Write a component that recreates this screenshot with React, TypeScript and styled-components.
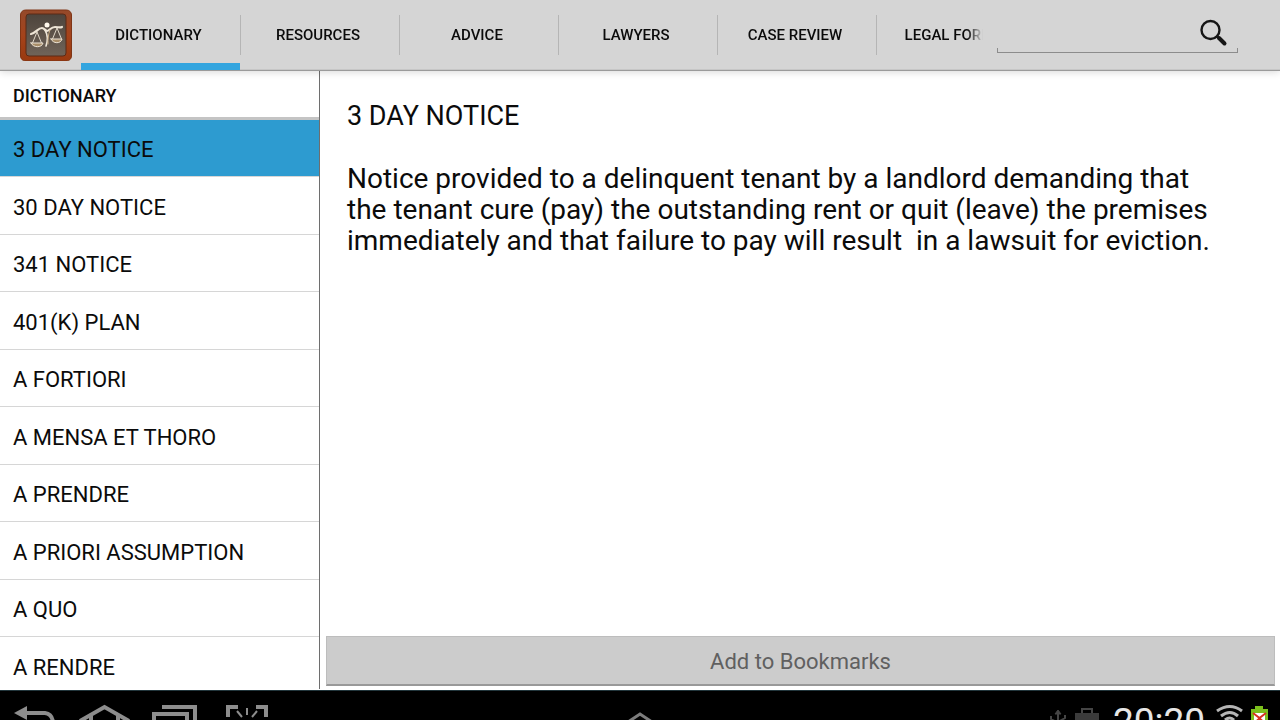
import React from 'react';
import styled, { createGlobalStyle } from 'styled-components';

const GlobalStyle = createGlobalStyle`
  * { box-sizing: border-box; }
  body { margin: 0; background: #fff; color: #0b0b0b; font-family: Roboto, "Liberation Sans", sans-serif; }
  button, input { font-family: inherit; color: inherit; }
`;

const Screen = styled.div`
  display: flex;
  flex-direction: column;
  height: 100vh;
  overflow: hidden;
`;

const TopBar = styled.header`
  display: flex;
  flex: none;
  height: 71px;
  padding-left: 11px;
  background: #d5d5d5;
  border-bottom: 1px solid #9a9a9a;
  box-shadow: inset 0 -1px 0 #c6c6c6, 0 1px 8px rgba(0, 0, 0, 0.16);
  z-index: 1;
`;

const Logo = styled.a`
  display: flex;
  flex: none;
  align-items: center;
  justify-content: center;
  width: 70px;
  svg { display: block; }
`;

const Tabs = styled.nav`
  display: flex;
  flex: 1;
  min-width: 0;
  overflow: hidden;
  mask-image: linear-gradient(to right, #000 calc(100% - 18px), transparent calc(100% - 2px));
`;

const Tab = styled.button<{ $active?: boolean }>`
  flex: none;
  display: flex;
  align-items: center;
  width: 159px;
  padding: 0;
  border: 0;
  background: none;
  font-size: 15px;
  font-weight: 500;
  line-height: 20px;
  cursor: pointer;
  box-shadow: ${(p) => (p.$active ? 'inset 0 -7px 0 #33a5df' : 'none')};

  span {
    flex: 1;
    display: flex;
    align-items: center;
    justify-content: center;
    height: 40px;
    padding-right: 4px;
  }
  &:not(:first-child) span { border-left: 1px solid #b5b5b5; }
`;

const Search = styled.form`
  display: flex;
  flex: none;
  align-items: center;
  width: 241px;
  height: 36px;
  margin: 17px 42px 0 12px;
  padding: 0 10px 4px 8px;
  background:
    linear-gradient(#8c8c8c, #8c8c8c) left bottom / 1px 5px no-repeat,
    linear-gradient(#8c8c8c, #8c8c8c) right bottom / 1px 5px no-repeat,
    linear-gradient(#8c8c8c, #8c8c8c) left bottom / 100% 1px no-repeat;
`;

const SearchInput = styled.input`
  flex: 1;
  min-width: 0;
  border: 0;
  outline: 0;
  background: none;
  font-size: 18px;
`;

const IconButton = styled.button`
  display: flex;
  flex: none;
  padding: 0;
  border: 0;
  background: none;
  cursor: pointer;
`;

const Main = styled.main`
  display: flex;
  flex: 1;
  min-height: 0;
`;

const Sidebar = styled.aside`
  display: flex;
  flex-direction: column;
  flex: none;
  width: 25%;
  border-right: 1px solid #6e6e6e;
  margin-bottom: 1px;
  overflow: hidden;
`;

const SidebarTitle = styled.h2`
  flex: none;
  margin: 0;
  height: 49px;
  padding: 15px 13px 0;
  border-bottom: 3px solid #c4c4c4;
  font-size: 18px;
  font-weight: 500;
  line-height: 20px;
`;

const TermList = styled.ul`
  margin: 0;
  padding: 0;
  list-style: none;
`;

const TermRow = styled.li`
  height: 57px;
  border-bottom: 1px solid #d6d6d6;
  &:nth-child(even) { height: 58px; }
`;

const TermButton = styled.button<{ $active?: boolean }>`
  width: 100%;
  height: 100%;
  padding: 4px 13px 0;
  border: 0;
  background: ${(p) => (p.$active ? '#2d9bd0' : 'transparent')};
  font-size: 22px;
  line-height: 28px;
  text-align: left;
  white-space: nowrap;
  cursor: pointer;
`;

const Detail = styled.section`
  display: flex;
  flex: 1;
  flex-direction: column;
  min-width: 0;
  padding: 30px 5px 4px 6px;
`;

const TermTitle = styled.h1`
  margin: 0 21px 31px;
  font-size: 27px;
  font-weight: 400;
  line-height: 31px;
`;

const Definition = styled.p`
  flex: 1;
  max-width: 880px;
  margin: 0 21px;
  font-size: 28px;
  line-height: 31px;
  white-space: pre-wrap;
`;

const BookmarkButton = styled.button`
  flex: none;
  height: 50px;
  padding: 2px 0 0;
  border: 1px solid #bdbdbd;
  border-bottom: 2px solid #999;
  background: #ccc;
  color: #606060;
  font-size: 22px;
  line-height: 28px;
  cursor: pointer;
`;

const SystemBar = styled.footer`
  display: flex;
  flex: none;
  justify-content: space-between;
  height: 30px;
  background: #000;
  border-top: 1px solid #22363c;
  overflow: hidden;
`;

const SystemGroup = styled.div`
  display: flex;
  flex: 1;
  &:nth-child(2) { justify-content: center; }
  &:last-child { justify-content: flex-end; }
`;

const Clock = styled.time`
  margin: 11px 9px 0 12px;
  color: #e6e6e6;
  font-size: 37px;
  line-height: 40px;
`;

const TABS = ['DICTIONARY', 'RESOURCES', 'ADVICE', 'LAWYERS', 'CASE REVIEW', 'LEGAL FORMS'];
const TERMS = [
  '3 DAY NOTICE', '30 DAY NOTICE', '341 NOTICE', '401(K) PLAN', 'A FORTIORI',
  'A MENSA ET THORO', 'A PRENDRE', 'A PRIORI ASSUMPTION', 'A QUO', 'A RENDRE',
];

const ScalesLogo = () => (
  <svg width="52" height="52" viewBox="0 0 52 52">
    <defs>
      <linearGradient id="wood" x1="0" y1="0" x2="0" y2="1">
        <stop offset="0" stopColor="#94492a" />
        <stop offset="0.5" stopColor="#a5431b" />
        <stop offset="1" stopColor="#98390f" />
      </linearGradient>
      <linearGradient id="slate" x1="0" y1="0" x2="0" y2="1">
        <stop offset="0" stopColor="#4d443c" />
        <stop offset="1" stopColor="#706459" />
      </linearGradient>
    </defs>
    <rect x="0.5" y="1" width="51" height="51" rx="5" fill="url(#wood)" stroke="#7f3516" />
    <rect x="6" y="5" width="40" height="42" rx="3" fill="url(#slate)" stroke="#5a2a16" />
    <g fill="none" stroke="#eee5d6" strokeLinecap="round">
      <circle cx="27" cy="16" r="2.500" fill="#fff8ec" stroke="none" />
      <path d="M11 25C16 24 18 19 22 19C24 19 26 22 27 22C29 22 31 18 35 18C38 18 40 19 42 18" strokeWidth="2.200" />
      <path d="M25 21C28 26 28 31 26 37" strokeWidth="1.600" />
      <path d="M30 21C28 26 28 30 28 35" strokeWidth="1" stroke="#c9ad86" />
      <path d="M17 23L12.500 34M17 23L21.500 34M37 19L32.500 30M37 19L41.500 30" strokeWidth="0.900" />
      <path d="M11 34H23C22 39 13 39 11 34ZM31 30H42C41 35 33 35 31 30Z" fill="#a88d68" strokeWidth="1" />
    </g>
  </svg>
);

const SearchIcon = () => (
  <svg width="28" height="28" viewBox="0 0 28 28" fill="none" stroke="#161616">
    <circle cx="10.500" cy="11" r="9" strokeWidth="2.400" />
    <path d="M16.500 17L19 19" strokeWidth="2.800" />
    <path d="M19 19L24.500 24.500" strokeWidth="4" strokeLinecap="round" />
  </svg>
);

const NavIcons = () => (
  <svg width="280" height="29" viewBox="0 691 280 29" fill="none" stroke="#8d8d8d" strokeWidth="4">
    <path d="M14 713L27 706V720Z" fill="#8d8d8d" stroke="none" />
    <path d="M26 713H45Q52 714 53 722" />
    <path d="M80 721L104.500 707L129 721M91 716V724M118 716V724" />
    <path d="M162 707H195V724M154 724V714H187V724" />
    <path d="M228 717V707H238M256 707H266V717" />
    <path d="M247 708V715M237 711L242 717M257 711L252 717" strokeWidth="2" />
  </svg>
);

const StatusIcons = () => (
  <svg width="54" height="29" viewBox="1046 691 54 29" fill="none" stroke="#454545">
    <path d="M1057 711V724M1050 716V719L1057 723M1064 715V718L1057 722" strokeWidth="2" />
    <path d="M1054 714L1057 710L1060 714Z" fill="#454545" />
    <path d="M1074 713H1098V724H1074Z" fill="#3b3b3b" stroke="none" />
    <path d="M1081 713V709H1091V713" strokeWidth="2" />
  </svg>
);

const SignalIcons = () => (
  <svg width="66" height="29" viewBox="1214 691 66 29" fill="none">
    <g stroke="#b5b5b5" strokeWidth="3">
      <path d="M1217 711Q1230 702 1242 711M1221 716Q1230 709 1238 716M1225 720Q1230 716 1234 720" />
    </g>
    <path d="M1251 709H1255V706H1263V709H1268V722H1251Z" fill="#7bc01c" />
    <path d="M1254 713H1265V722H1254Z" fill="#fff" />
    <path d="M1253 713L1259.500 718L1266 713" stroke="#d8321f" strokeWidth="2" />
    <path d="M1254 722L1259.500 717L1265 722Z" fill="#d8321f" />
  </svg>
);

export default function App() {
  return (
    <Screen>
      <GlobalStyle />
      <TopBar>
        <Logo href="#home" aria-label="Home"><ScalesLogo /></Logo>
        <Tabs>
          {TABS.map((t, i) => (
            <Tab key={t} type="button" $active={i === 0}><span>{t}</span></Tab>
          ))}
        </Tabs>
        <Search role="search">
          <SearchInput type="text" aria-label="Search" />
          <IconButton type="button" aria-label="Search"><SearchIcon /></IconButton>
        </Search>
      </TopBar>
      <Main>
        <Sidebar>
          <SidebarTitle>DICTIONARY</SidebarTitle>
          <TermList>
            {TERMS.map((t, i) => (
              <TermRow key={t}><TermButton type="button" $active={i === 0}>{t}</TermButton></TermRow>
            ))}
          </TermList>
        </Sidebar>
        <Detail>
          <TermTitle>3 DAY NOTICE</TermTitle>
          <Definition>
            {'Notice provided to a delinquent tenant by a landlord demanding that the tenant cure (pay) the outstanding rent or quit (leave) the premises immediately and that failure to pay will result  in a lawsuit for eviction.'}
          </Definition>
          <BookmarkButton type="button">Add to Bookmarks</BookmarkButton>
        </Detail>
      </Main>
      <SystemBar>
        <SystemGroup><NavIcons /></SystemGroup>
        <SystemGroup>
          <svg width="32" height="29" viewBox="0 0 32 29" fill="none" stroke="#7c7c7c" strokeWidth="3">
            <path d="M4 31L16 23L28 31" />
          </svg>
        </SystemGroup>
        <SystemGroup>
          <StatusIcons />
          <Clock>20:20</Clock>
          <SignalIcons />
        </SystemGroup>
      </SystemBar>
    </Screen>
  );
}
